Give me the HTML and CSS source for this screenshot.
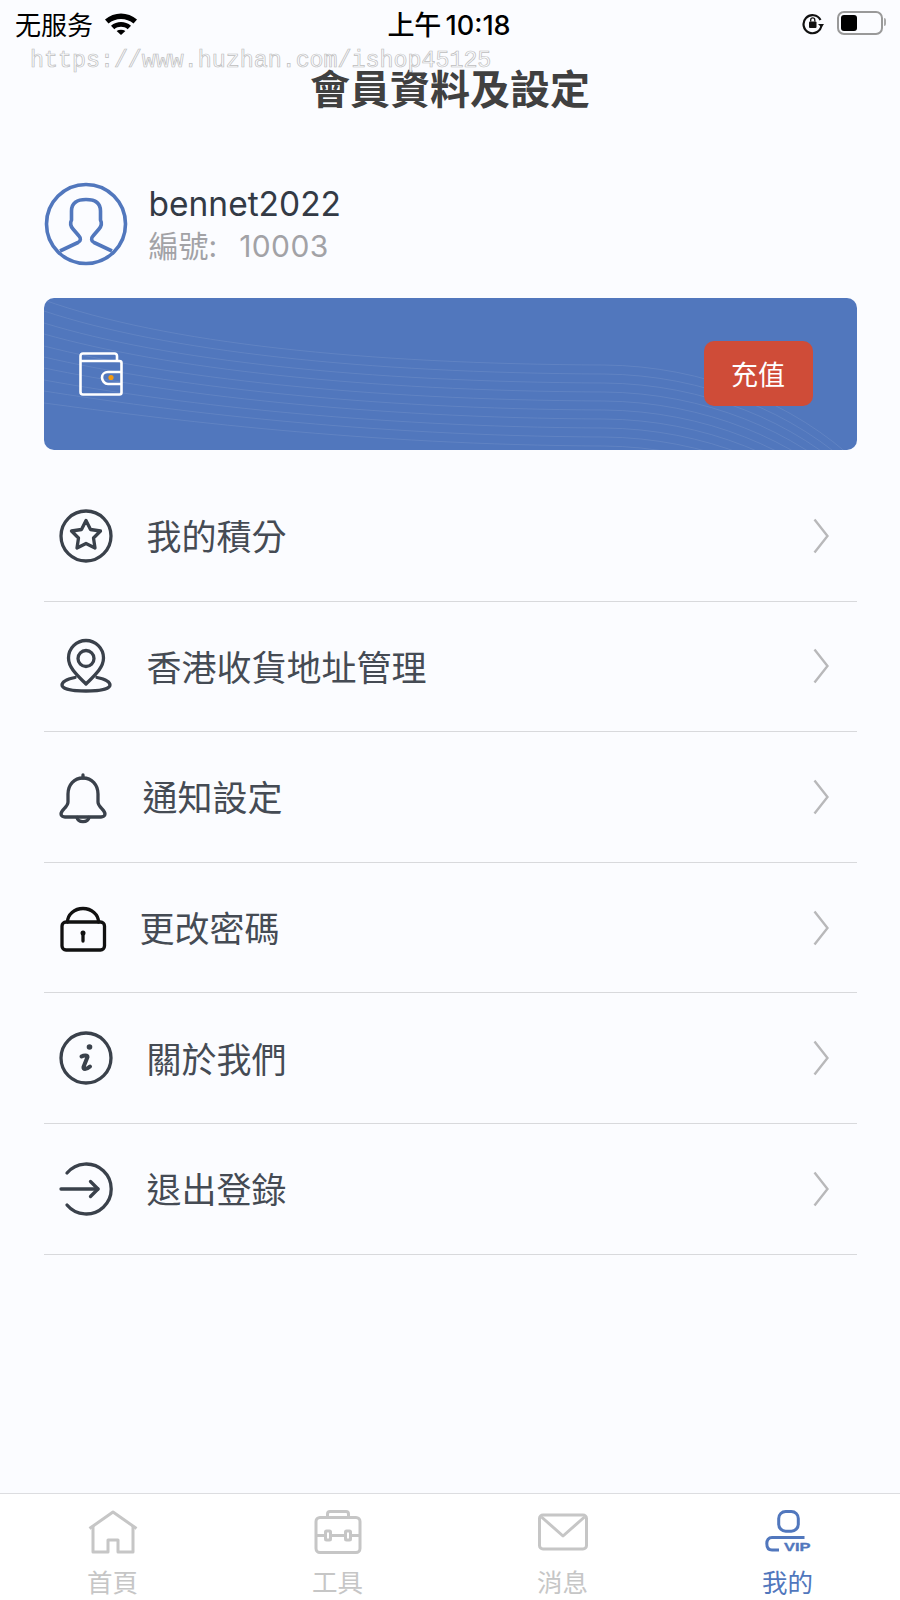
FILE: index.html
```html
<!DOCTYPE html>
<html lang="zh-Hant">

<head>
  <meta charset="UTF-8">
  <meta name="viewport" content="width=device-width, initial-scale=1.0">
  <title>會員資料及設定</title>
  <link rel="stylesheet" href="styles.css">
</head>

<body>
  <div class="page">
    <div class="status-bar">
      <div class="status-left">
        <span>无服务</span>
        <svg class="wifi" width="34" height="24" viewBox="0 0 34 24">
          <path d="M1 8.500C10 0.500 24 0.500 33 8.500L29.500 12.500C22.500 6.500 11.500 6.500 4.500 12.500Z" />
          <path d="M7 14.700C12.800 9.800 21.200 9.800 27 14.700L23.700 18.200C19.800 15 14.200 15 10.300 18.200Z" />
          <path d="M12.600 20C15.200 18.200 18.800 18.200 21.400 20L17 24Z" />
        </svg>
      </div>
      <div class="status-time">上午 10:18</div>
      <div class="status-right">
        <svg width="24" height="24" viewBox="0 0 24 24" fill="none" stroke="#111">
          <path d="M19.500 9A9 9 0 1 0 20.500 14" stroke-width="2.200" />
          <path d="M17 13H23L20.500 16.500Z" fill="#111" stroke="none" />
          <rect x="8" y="10.500" width="7.500" height="6.500" rx="1" fill="#111" stroke="none" />
          <path d="M9.700 10.500V9A2 2 0 0 1 13.800 9V10.500" stroke-width="1.300" />
        </svg>
        <div class="battery"><div class="battery-level"></div></div>
      </div>
    </div>

    <div class="watermark">https://www.huzhan.com/ishop45125</div>

    <h1 class="page-title">會員資料及設定</h1>

    <main class="content">
      <section class="profile">
        <svg class="avatar" width="84" height="84" viewBox="0 0 84 84" fill="none" stroke="#5177bd" stroke-width="3.600" stroke-linejoin="round">
          <circle cx="42" cy="42" r="39.500" />
          <path d="M16 69L34 60.500C37 59 37 56 35 54L29 47C26 43.500 26 41 27.500 38V29C27.500 21 33 17.500 42 17.500C51 17.500 56.500 21 56.500 29V38C58 41 58 43.500 55 47L49 54C47 56 47 59 50 60.500L68 69" />
        </svg>
        <div class="profile-info">
          <div class="username">bennet2022</div>
          <div class="member-no">編號:<span class="member-id">10003</span></div>
        </div>
      </section>

      <section class="wallet-card">
        <svg class="waves" width="814" height="152" viewBox="0 0 814 152" fill="none" stroke="#fff" stroke-opacity="0.09">
          <path d="M0 2C120 45 320 66 560 67C660 68 750 105 814 165" />
          <path d="M0 13C120 53 320 75 560 76C660 77 750 114 814 174" />
          <path d="M0 25C120 62 320 84 560 85C660 86 750 123 814 183" />
          <path d="M0 36C120 70 320 93 560 94C660 95 750 132 814 192" />
          <path d="M0 48C120 79 320 102 560 103C660 104 750 141 814 201" />
          <path d="M0 59C120 87 320 111 560 112C660 113 750 150 814 210" />
          <path d="M0 70C120 95 320 120 560 121C660 122 750 159 814 219" />
          <path d="M0 82C120 104 320 129 560 130C660 131 750 168 814 228" />
          <path d="M0 93C120 112 320 138 560 139C660 140 750 177 814 237" />
          <path d="M0 105C120 121 320 147 560 148C660 149 750 186 814 246" />
        </svg>
        <svg class="wallet-icon" width="44" height="44" viewBox="0 0 44 44" fill="none" stroke="#fff" stroke-width="2.600" stroke-linejoin="round">
          <path d="M38 9V4C38 2.500 37 1.500 35.500 1.500H4C2.500 1.500 1.500 2.500 1.500 4V40C1.500 41.500 2.500 42.500 4 42.500H40.500C41.700 42.500 42.500 41.700 42.500 40.500V11C42.500 9.800 41.700 9 40.500 9H1.500" />
          <path d="M42.500 20H29C25.500 20 23 22.500 23 25.500C23 28.500 25.500 32 29 32H42.500" />
          <circle cx="32" cy="25.500" r="2.600" fill="#f39a11" stroke="none" />
        </svg>
        <button class="topup-btn">充值</button>
      </section>

      <ul class="menu">
        <li class="menu-row">
          <svg class="menu-icon" viewBox="0 0 56 56">
            <circle cx="28" cy="28" r="25" />
            <path d="M28 12.500L32.500 21.500L42.500 23L35.500 30L37 40L28 35.500L19 40L20.500 30L13.500 23L23.500 21.500Z" />
          </svg>
          <span class="menu-label">我的積分</span>
          <svg class="chevron" width="16" height="36" viewBox="0 0 16 36"><path d="M1.500 1.500L14.500 18L1.500 34.500" /></svg>
        </li>
        <li class="menu-row">
          <svg class="menu-icon" viewBox="0 0 56 56">
            <circle cx="28" cy="20.500" r="8" />
            <path d="M28 46C20 38 10.500 30 10.500 20A17.500 17.500 0 0 1 45.500 20C45.500 30 36 38 28 46Z" />
            <path d="M17 39.500C9 41 4 44 4 47C4 51 15 53 28 53C41 53 52 51 52 47C52 44 47 41 39 39.500" />
          </svg>
          <span class="menu-label">香港收貨地址管理</span>
          <svg class="chevron" width="16" height="36" viewBox="0 0 16 36"><path d="M1.500 1.500L14.500 18L1.500 34.500" /></svg>
        </li>
        <li class="menu-row">
          <svg class="menu-icon menu-icon-shift" viewBox="0 0 56 56">
            <path d="M28 9C19 9 13 16 13 25V33C13 38 6 41 6 45C6 47 8 48 10 48H46C48 48 50 47 50 45C50 41 43 38 43 33V25C43 16 37 9 28 9Z" />
            <path d="M28 6V9" />
            <path d="M22 48.500C23 54 33 54 34 48.500" />
          </svg>
          <span class="menu-label label-bell">通知設定</span>
          <svg class="chevron" width="16" height="36" viewBox="0 0 16 36"><path d="M1.500 1.500L14.500 18L1.500 34.500" /></svg>
        </li>
        <li class="menu-row">
          <svg class="menu-icon menu-icon-shift menu-icon-dark" viewBox="0 0 56 56">
            <rect x="7" y="22" width="42.500" height="28" rx="4" />
            <path d="M12.500 22A15.500 13.500 0 0 1 43.500 22" />
            <circle class="key-dot" cx="28" cy="33" r="2.500" />
            <path class="key-stem" d="M28 33V41" />
          </svg>
          <span class="menu-label label-lock">更改密碼</span>
          <svg class="chevron" width="16" height="36" viewBox="0 0 16 36"><path d="M1.500 1.500L14.500 18L1.500 34.500" /></svg>
        </li>
        <li class="menu-row">
          <svg class="menu-icon" viewBox="0 0 56 56">
            <circle cx="28" cy="28" r="25" />
            <circle class="key-dot" cx="31.500" cy="17" r="2.800" />
            <path class="info-stem" d="M23.500 26.500C26 25 29.500 25 29.500 27L25.500 37C25 39.500 28 40 32 36.500" />
          </svg>
          <span class="menu-label">關於我們</span>
          <svg class="chevron" width="16" height="36" viewBox="0 0 16 36"><path d="M1.500 1.500L14.500 18L1.500 34.500" /></svg>
        </li>
        <li class="menu-row">
          <svg class="menu-icon" viewBox="0 0 56 56">
            <path d="M9 12A25 25 0 1 1 9 44" />
            <path d="M3 28H40" />
            <path d="M32.500 20.500L40 28L32.500 35.500" />
          </svg>
          <span class="menu-label">退出登錄</span>
          <svg class="chevron" width="16" height="36" viewBox="0 0 16 36"><path d="M1.500 1.500L14.500 18L1.500 34.500" /></svg>
        </li>
      </ul>
    </main>

    <nav class="tab-bar">
      <a class="tab-item">
        <svg class="tab-icon" viewBox="0 0 50 44">
          <path d="M1.500 18.500L25 2L48.500 18.500" />
          <path d="M5 16V42H20V30H30V42H45V16" />
        </svg>
        <span>首頁</span>
      </a>
      <a class="tab-item">
        <svg class="tab-icon" viewBox="0 0 50 44">
          <rect x="3" y="7.500" width="44" height="35" rx="4" />
          <path d="M14.500 7V4C14.500 2.500 15.500 1.500 17 1.500H33C34.500 1.500 35.500 2.500 35.500 4V7" />
          <path d="M3 25.500H12.500M17.500 25.500H32.500M37.500 25.500H47" />
          <rect x="12.500" y="21" width="5" height="9" rx="1" />
          <rect x="32.500" y="21" width="5" height="9" rx="1" />
        </svg>
        <span>工具</span>
      </a>
      <a class="tab-item">
        <svg class="tab-icon" viewBox="0 0 50 44">
          <rect x="1.500" y="5" width="47" height="34" rx="3.500" />
          <path d="M3.500 7L25 26L46.500 7" />
        </svg>
        <span>消息</span>
      </a>
      <a class="tab-item tab-item-active">
        <svg class="tab-icon" viewBox="0 0 50 44">
          <rect x="15.700" y="1.500" width="19.600" height="19.700" rx="7" />
          <path class="vip-c" d="M41.500 27.500H9C5.500 27.500 3.800 30 3.800 33.500C3.800 37.500 5.500 40 9 40H16" />
          <text class="vip-text" x="21" y="41" textLength="26.500" lengthAdjust="spacingAndGlyphs">VIP</text>
        </svg>
        <span>我的</span>
      </a>
    </nav>
  </div>
</body>

</html>
```

FILE: styles.css
```css
/* page */
body {
  margin: 0;
  font-family: Inter, "Noto Sans CJK TC", sans-serif;
}

.page {
  position: relative;
  width: 900px;
  height: 1600px;
  overflow: hidden;
  display: flex;
  flex-direction: column;
  background-color: #fbfcff;
}

/* status bar */
.status-bar {
  height: 44px;
  padding: 2px 17px 0 15px;
  box-sizing: border-box;
  display: grid;
  grid-template-columns: 1fr auto 1fr;
  align-items: center;
  color: #000;
  font-size: 26px;
  font-family: Inter, "Noto Sans CJK SC", sans-serif;
}

.status-left {
  display: flex;
  align-items: center;
  gap: 11px;
}

.wifi {
  fill: #000;
}

.status-time {
  font-size: 27px;
  font-weight: 500;
  word-spacing: -3px;
}

.status-right {
  display: flex;
  justify-content: flex-end;
  align-items: center;
  gap: 12px;
}

.battery {
  position: relative;
  width: 46px;
  height: 24px;
  padding: 2px;
  box-sizing: border-box;
  border: 2px solid #999;
  border-radius: 7px;
}

.battery::after {
  content: "";
  position: absolute;
  top: 5px;
  right: -5px;
  width: 2px;
  height: 8px;
  background-color: #aaa;
  border-radius: 0 2px 2px 0;
}

.battery-level {
  width: 16px;
  height: 16px;
  background-color: #000;
  border-radius: 3px;
}

/* site watermark over the header */
.watermark {
  position: absolute;
  top: 46px;
  left: 30px;
  font-family: "Liberation Mono", monospace;
  font-size: 23.300px;
  line-height: 30px;
  color: #fbfcff;
  -webkit-text-stroke: 0.7px #bdbdbd;
}

.page-title {
  margin: 21px 0 0;
  text-align: center;
  font-size: 40px;
  line-height: 50px;
  font-weight: 700;
  color: #404040;
}

/* content */
.content {
  flex: 1;
  padding: 67px 43.500px 0;
}

.profile {
  display: flex;
  align-items: center;
  gap: 21px;
}

.username {
  font-size: 33.500px;
  line-height: 44px;
  color: #333a45;
}

.member-no {
  font-size: 30px;
  line-height: 40px;
  color: #a2a2a6;
}

.member-id {
  margin-left: 22px;
  letter-spacing: 0.400px;
}

/* wallet card */
.wallet-card {
  position: relative;
  overflow: hidden;
  height: 152px;
  margin-top: 32px;
  padding: 0 44px 2px 35px;
  box-sizing: border-box;
  display: flex;
  justify-content: space-between;
  align-items: center;
  background-color: #5177bd;
  border-radius: 10px;
}

.waves {
  position: absolute;
  top: 0;
  left: 0;
}

.wallet-icon,
.topup-btn {
  position: relative;
}

.wallet-icon {
  margin-top: 2px;
}

.topup-btn {
  width: 109px;
  height: 65px;
  border: none;
  border-radius: 10px;
  background-color: #cf4c38;
  color: #fff;
  font-family: "Noto Sans CJK TC", sans-serif;
  font-size: 27px;
}

/* menu */
.menu {
  list-style: none;
  margin: 21px 0 0;
  padding: 0;
}

.menu-row {
  height: 130.600px;
  box-sizing: border-box;
  padding: 0 28px 0 14px;
  display: flex;
  align-items: center;
  border-bottom: 1px solid #d8d9dc;
  color: #454b54;
  font-size: 35px;
}

.menu-icon {
  flex: none;
  width: 56px;
  height: 56px;
  fill: none;
  stroke: #3a414b;
  stroke-width: 3.300;
  stroke-linejoin: round;
  stroke-linecap: round;
}

.menu-icon-shift {
  margin-left: -3px;
}

.menu-icon-dark {
  stroke: #111;
}

.key-dot {
  fill: #3a414b;
  stroke: none;
}

.menu-icon-dark .key-dot {
  fill: #111;
}

.info-stem {
  stroke-width: 4;
}

.menu-label {
  flex: 1;
  margin: -2px 0 0 33px;
}

.label-bell {
  margin-left: 32px;
}

.label-lock {
  margin-left: 29px;
}

.chevron {
  flex: none;
  fill: none;
  stroke: #b8b8ba;
  stroke-width: 2.400;
}

/* tab bar */
.tab-bar {
  height: 107px;
  box-sizing: border-box;
  padding-top: 16px;
  display: grid;
  grid-template-columns: repeat(4, 1fr);
  background-color: #fff;
  border-top: 1px solid #dcdde0;
}

.tab-item {
  display: flex;
  flex-direction: column;
  align-items: center;
  color: #c6c6c6;
  font-size: 25.500px;
  line-height: 36px;
}

.tab-icon {
  width: 50px;
  height: 44px;
  margin-bottom: 11px;
  fill: none;
  stroke: #c6c6c6;
  stroke-width: 3;
  stroke-linejoin: round;
}

.tab-item-active {
  color: #5177bd;
}

.tab-item-active .tab-icon {
  stroke: #5177bd;
}

.vip-c {
  stroke-width: 3;
}

.vip-text {
  fill: #5177bd;
  stroke: #5177bd;
  stroke-width: 0.300;
  font-family: "Liberation Sans", sans-serif;
  font-size: 11px;
  font-weight: 700;
}
```
